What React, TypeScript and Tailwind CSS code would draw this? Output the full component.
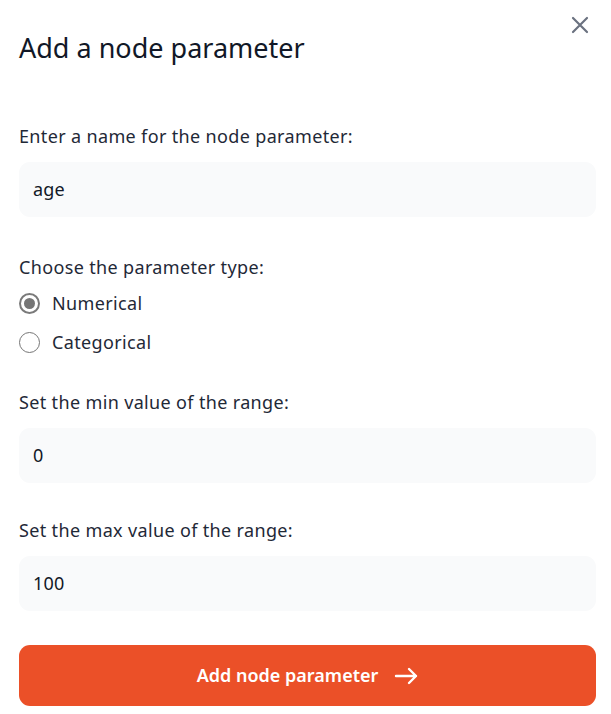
import React, { useState } from 'react'

const font = { fontFamily: '"Noto Sans", "Open Sans", sans-serif' }

function Field({ label, value }: { label: string; value: string }) {
  return (
    <div className="flex flex-col">
      <label className="text-[18px] leading-[27px] tracking-[0.35px] text-[#1f2937]">{label}</label>
      <div className="mt-[12px] h-[55px] rounded-[11px] bg-[#f9fafb] px-[14px] flex items-center text-[18px] tracking-[0.2px] text-[#111827]">
        {value}
      </div>
    </div>
  )
}

function Radio({ label, checked, onClick }: { label: string; checked: boolean; onClick: () => void }) {
  return (
    <button type="button" onClick={onClick} className="flex items-center gap-[12px] h-[27px] text-left">
      <span
        className={
          checked
            ? 'w-[21px] h-[21px] rounded-full border-2 border-[#7a7a7a] flex items-center justify-center'
            : 'w-[21px] h-[21px] rounded-full border border-[#767676]'
        }
      >
        {checked && <span className="w-[11px] h-[11px] rounded-full bg-[#767676]" />}
      </span>
      <span className="text-[18px] tracking-[0.35px] text-[#1f2937]">{label}</span>
    </button>
  )
}

export default function App() {
  const [type, setType] = useState<'num' | 'cat'>('num')

  return (
    <div className="min-h-screen bg-white relative pl-[19px] pr-[15px] pt-[30px]" style={font}>
      {/* close */}
      <button type="button" className="absolute top-[16px] right-[22px] text-[#6b7280]">
        <svg width="18" height="18" viewBox="0 0 18 18" fill="none" stroke="currentColor" strokeWidth="2.2" strokeLinecap="round">
          <path d="M2 2L16 16M16 2L2 16" />
        </svg>
      </button>

      <h1 className="text-[27px] leading-[36px] text-[#111827]">Add a node parameter</h1>

      <div className="mt-[57px]">
        <Field label="Enter a name for the node parameter:" value="age" />
      </div>

      <div className="mt-[37px] flex flex-col">
        <span className="text-[18px] leading-[27px] tracking-[0.35px] text-[#1f2937]">Choose the parameter type:</span>
        <div className="mt-[9px] flex flex-col gap-[12px]">
          <Radio label="Numerical" checked={type === 'num'} onClick={() => setType('num')} />
          <Radio label="Categorical" checked={type === 'cat'} onClick={() => setType('cat')} />
        </div>
      </div>

      <div className="mt-[33px]">
        <Field label="Set the min value of the range:" value="0" />
      </div>

      <div className="mt-[34px]">
        <Field label="Set the max value of the range:" value="100" />
      </div>

      <button
        type="button"
        className="mt-[34px] w-full h-[61px] rounded-[11px] bg-[#eb5028] text-white font-semibold text-[18px] flex items-center justify-center gap-[16px]"
      >
        Add node parameter
        <svg width="24" height="18" viewBox="0 0 24 18" fill="none" stroke="currentColor" strokeWidth="2.4" strokeLinecap="round" strokeLinejoin="round">
          <path d="M2 9H22M15 2L22 9L15 16" />
        </svg>
      </button>
    </div>
  )
}
